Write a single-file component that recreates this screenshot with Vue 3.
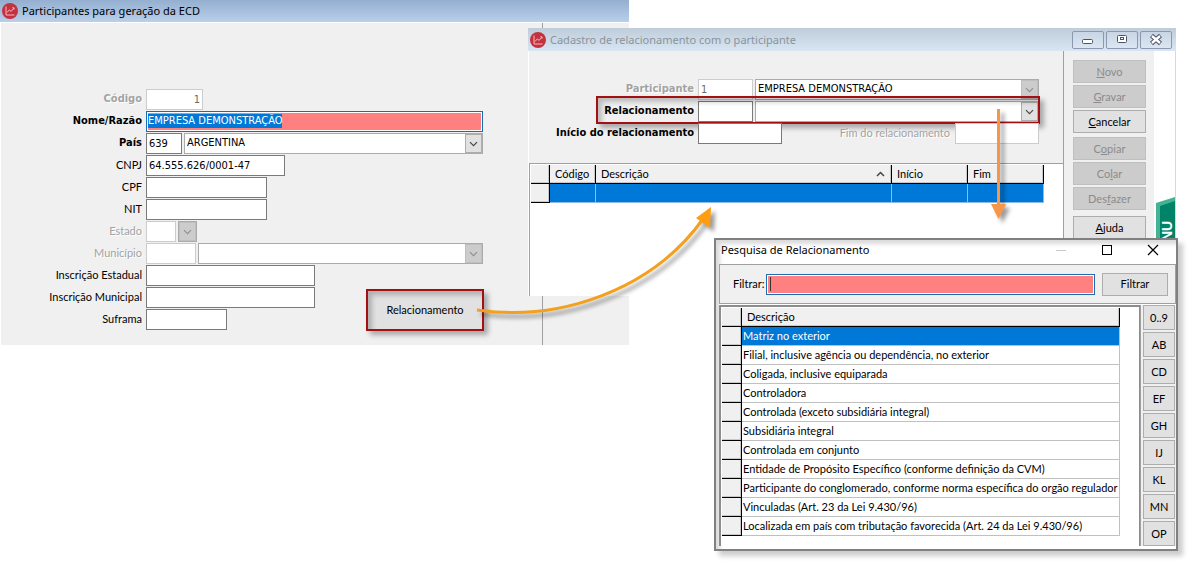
<script setup>
const form = [
  { id: 'codigo', label: 'Código', bold: true, off: true, w: 'w57', value: '1', right: true },
  { id: 'nome', label: 'Nome/Razão', bold: true, focus: true, w: 'w337', value: 'EMPRESA DEMONSTRAÇÃO' },
  { id: 'pais', label: 'País', bold: true, w: 'w36', value: '639', combo: 'ARGENTINA' },
  { id: 'cnpj', label: 'CNPJ', w: 'w139', value: '64.555.626/0001-47' },
  { id: 'cpf', label: 'CPF', w: 'w121', value: '' },
  { id: 'nit', label: 'NIT', w: 'w121', value: '' },
  { id: 'estado', label: 'Estado', off: true, w: 'w30', value: '', combo: '', small: true },
  { id: 'municipio', label: 'Município', off: true, w: 'w50', value: '', combo: '' },
  { id: 'ie', label: 'Inscrição Estadual', w: 'w169', value: '' },
  { id: 'im', label: 'Inscrição Municipal', w: 'w169', value: '' },
  { id: 'suframa', label: 'Suframa', w: 'w81', value: '' },
]
const actions = [
  [['', 'N', 'ovo', true], ['', 'G', 'ravar', true], ['', 'C', 'ancelar', false]],
  [['C', 'o', 'piar', true], ['Co', 'l', 'ar', true], ['Des', 'f', 'azer', true]],
  [['', 'A', 'juda', false]],
]
const rows = [
  'Matriz no exterior',
  'Filial, inclusive agência ou dependência, no exterior',
  'Coligada, inclusive equiparada',
  'Controladora',
  'Controlada (exceto subsidiária integral)',
  'Subsidiária integral',
  'Controlada em conjunto',
  'Entidade de Propósito Específico (conforme definição da CVM)',
  'Participante do conglomerado, conforme norma específica do orgão regulador',
  'Vinculadas (Art. 23 da Lei 9.430/96)',
  'Localizada em país com tributação favorecida (Art. 24 da Lei 9.430/96)',
]
const letters = ['0..9', 'AB', 'CD', 'EF', 'GH', 'IJ', 'KL', 'MN', 'OP']
</script>

<template>
  <main class="desk">
    <section class="win main-win">
      <header class="bar">
        <svg class="logo" viewBox="0 0 16 16"><circle cx="8" cy="8" r="8" fill="#c4313f" /><path d="M4 3.500V12h8.500M5 9.500l2.300-2.600 1.800 1.500L12 5M10.300 4.800H12v1.800" fill="none" stroke="#f5b9c0" stroke-width="1" /></svg>
        <h1>Participantes para geração da ECD</h1>
      </header>
      <div class="main-body">
        <form class="fields" @submit.prevent>
          <div v-for="f in form" :key="f.id" class="row">
            <label :for="f.id" :class="{ bold: f.bold, off: f.off }">{{ f.label }}</label>
            <span v-if="f.focus" class="focus" :class="f.w"><input :id="f.id" class="selected caps-text" :value="f.value" /></span>
            <input v-else :id="f.id" class="box caps-text" :class="[f.w, { right: f.right }]" :value="f.value" :disabled="f.off" />
            <span v-if="f.combo !== undefined" class="combo" :class="{ small: f.small, dis: f.off }">
              <select :aria-label="f.label + ' descrição'" class="caps-text" :disabled="f.off"><option>{{ f.combo }}</option></select>
              <svg class="drop" viewBox="0 0 17 19"><path d="M4.500 8l4 4 4-4" /></svg>
            </span>
          </div>
          <div class="mark rel-mark"><button type="button">Relacionamento</button></div>
        </form>
      </div>
    </section>

    <section class="win rel-win">
      <header class="bar faded">
        <svg class="logo" viewBox="0 0 16 16"><circle cx="8" cy="8" r="8" fill="#c4313f" /><path d="M4 3.500V12h8.500M5 9.500l2.300-2.600 1.800 1.500L12 5M10.300 4.800H12v1.800" fill="none" stroke="#f5b9c0" stroke-width="1" /></svg>
        <h2>Cadastro de relacionamento com o participante</h2>
        <div class="caps">
          <button aria-label="Minimizar"><svg viewBox="0 0 30 17"><rect x="9.500" y="7.500" width="10" height="4" rx="1" fill="#fff" stroke="#4c5568" /></svg></button>
          <button aria-label="Restaurar"><svg viewBox="0 0 30 17"><rect x="10.500" y="3.500" width="9" height="7" rx="1" fill="#fff" stroke="#4c5568" /><rect x="13.500" y="5.500" width="3" height="2" fill="#fff" stroke="#4c5568" /></svg></button>
          <button aria-label="Fechar"><svg viewBox="0 0 30 17"><path d="M10.500 3.500l9 8m0-8l-9 8" stroke="#4c5568" stroke-width="4.500" /><path d="M11 4l8 7m0-7l-8 7" stroke="#fff" stroke-width="2.400" /></svg></button>
        </div>
      </header>
      <div class="rel-body">
        <div class="rel-left">
          <form class="rel-form" @submit.prevent>
            <div class="row">
              <label for="part" class="bold off">Participante</label>
              <input id="part" class="box caps-text w55" value="1" disabled />
              <span class="combo dis blacktext"><select aria-label="Nome do participante" class="caps-text" disabled><option>EMPRESA DEMONSTRAÇÃO</option></select><svg class="drop" viewBox="0 0 17 19"><path d="M4.500 8l4 4 4-4" /></svg></span>
            </div>
            <div class="row">
              <label for="rel" class="bold">Relacionamento</label>
              <input id="rel" class="box w55" />
              <span class="combo"><select aria-label="Descrição do relacionamento"><option></option></select><svg class="drop" viewBox="0 0 17 19"><path d="M4.500 8l4 4 4-4" /></svg></span>
              <span class="mark row-mark"></span>
            </div>
            <div class="row">
              <label for="ini" class="bold">Início do relacionamento</label>
              <input id="ini" class="box w84" />
              <label for="fim" class="off end">Fim do relacionamento</label>
              <input id="fim" class="box w84" disabled />
            </div>
          </form>
          <div class="rel-grid">
            <table>
              <colgroup><col class="c19" /><col class="c46" /><col class="c296" /><col class="c76" /><col class="c76" /></colgroup>
              <thead><tr><th></th><th>Código</th><th><span class="sort">Descrição<svg viewBox="0 0 9 6"><path d="M1 5l3.500-3.500L8 5" fill="none" stroke="#444" stroke-width="1.500" /></svg></span></th><th>Início</th><th>Fim</th></tr></thead>
              <tbody><tr class="sel"><th></th><td></td><td></td><td></td><td></td></tr></tbody>
            </table>
          </div>
        </div>
        <aside class="side">
          <div v-for="(g, i) in actions" :key="i" class="group">
            <button v-for="a in g" :key="a[1]" :disabled="a[3]">{{ a[0] }}<u>{{ a[1] }}</u>{{ a[2] }}</button>
          </div>
        </aside>
        <div class="strip">
          <svg viewBox="0 0 19 60"><path d="M0 6L19 0v60H0z" fill="#43b394" /><path d="M4 9l15-5v56H4z" fill="#008368" /><text transform="translate(16 44) rotate(-90)" fill="#fff" font-size="14" font-weight="700" font-family="Liberation Sans, sans-serif">NU</text></svg>
        </div>
      </div>
    </section>

    <section class="win search-win">
      <header class="plain">
        <h2>Pesquisa de Relacionamento</h2>
        <div class="sys">
          <button aria-label="Minimizar"><svg viewBox="0 0 12 12"><path d="M1 6.500h10" stroke="#c8c8c8" /></svg></button>
          <button aria-label="Maximizar"><svg viewBox="0 0 12 12"><rect x="1.500" y="1.500" width="9" height="9" fill="none" stroke="#000" /></svg></button>
          <button aria-label="Fechar"><svg viewBox="0 0 12 12"><path d="M1 1l10 10M11 1L1 11" stroke="#000" stroke-width="1.200" /></svg></button>
        </div>
      </header>
      <form class="filter" @submit.prevent>
        <label for="filtrar">Filtrar:</label>
        <span class="focus"><i class="caret"></i><input id="filtrar" /></span>
        <button type="button">Filtrar</button>
      </form>
      <div class="result">
        <div class="list">
          <table>
            <colgroup><col class="c20" /><col class="c378" /></colgroup>
            <thead><tr><th></th><th>Descrição</th></tr></thead>
            <tbody><tr v-for="(r, i) in rows" :key="r" :class="{ sel: i === 0 }"><th></th><td>{{ r }}</td></tr></tbody>
          </table>
        </div>
        <nav class="letters"><button v-for="l in letters" :key="l">{{ l }}</button></nav>
      </div>
    </section>

    <svg class="arrows" width="1194" height="565" viewBox="0 0 1194 565">
      <path d="M477 310C560 322 652 290 703 219" fill="none" stroke="#f3a01e" stroke-width="3" />
      <path d="M711 207l-1 21-14-10z" fill="#ff9c10" />
      <path d="M998.500 109v98" stroke="#f79646" stroke-width="3" />
      <path d="M991 204h15l-7.500 15z" fill="#f79646" />
    </svg>
  </main>
</template>

<style>
body { background: #fff; }
</style>

<style scoped>
* { box-sizing: border-box; }
.desk { position: relative; min-height: 100vh; overflow: hidden; font: 11px/14px Lato, "Noto Sans", sans-serif; color: #000; }
h1, h2 { margin: 0; font: 11px/16px "Noto Sans", sans-serif; }
button, input, select { font: inherit; color: inherit; margin: 0; border-radius: 0; }
button { padding: 0; background: #e1e1e1; border: 1px solid #adadad; }
.win { position: absolute; background: #f0f0f0; }
.bar { display: flex; align-items: center; gap: 4px; height: 22px; padding: 0 2px; background: linear-gradient(#94afd0, #b9d0ea); }
.bar.faded { height: 23px; color: #8a939c; background: linear-gradient(#bfcddb, #d8e5f2); }
.logo { width: 16px; height: 16px; }
.main-win { left: 0; top: 0; width: 629px; }
.main-body { border-left: 1px solid #fff; border-top: 1px solid #fff; }
.fields { position: relative; width: 542px; padding: 65px 59px 15px 0; border-right: 1px solid #a0a0a0; }
.row { position: relative; display: flex; align-items: center; gap: 2px; height: 22px; }
.row > label { width: 141px; margin-right: 2px; text-align: right; white-space: nowrap; }
.row > .bold, .caps-text { font-family: "DejaVu Sans Condensed", "DejaVu Sans", sans-serif; }
.bold { font-weight: 700; }
.off { color: #a3a3a3; text-shadow: 1px 1px #fff; }
.box { height: 21px; padding: 0 2px; border: 1px solid #7a7a7a; background: #fff; outline: 0; }
.box:disabled { border-color: #ccc; color: #6d6d6d; }
.right { text-align: right; }
.w30 { width: 30px; } .w36 { width: 36px; } .w50 { width: 50px; } .w55 { width: 55px; } .w57 { width: 57px; }
.w81 { width: 81px; } .w84 { width: 84px; } .w121 { width: 121px; } .w139 { width: 139px; } .w169 { width: 169px; } .w337 { width: 337px; }
.focus { position: relative; display: flex; height: 21px; padding: 1px; border: 1px solid #1c6cb4; background: #fff; }
.focus input { width: 100%; border: 0; padding: 0; background: #ff8080; outline: 0; }
.focus .selected { background: linear-gradient(#0078d7, #0078d7) no-repeat 0 1px / 134px 14px #ff8080; color: #fff; }
.combo { position: relative; flex: 1; display: flex; height: 21px; border: 1px solid #ababab; background: #fff; }
.combo select { flex: 1; min-width: 0; appearance: none; border: 0; padding: 0 2px; background: transparent; outline: 0; opacity: 1; }
.combo.small { flex: 0 0 18px; }
.combo.small select { width: 0; padding: 0; }
.drop { width: 17px; height: 19px; border: 1px solid #adadad; background: #e1e1e1; fill: none; stroke: #444; stroke-width: 1.300; }
.dis .drop { background: #ccc; border-color: #bfbfbf; stroke: #909090; }
.mark { border: 2px solid #a31014; box-shadow: 4px 4px 5px rgba(0,0,0,.3), inset 4px 4px 5px rgba(0,0,0,.22); }
.rel-mark { position: absolute; right: 58px; bottom: 14px; width: 118px; height: 42px; background: #e1e1e1; display: flex; }
.rel-mark button { flex: 1; background: transparent; border: 0; }

.rel-win { left: 528px; top: 28px; width: 648px; }
.caps { display: flex; gap: 2px; margin-left: auto; padding-right: 2px; }
.caps button { width: 32px; height: 18px; background: linear-gradient(#c8d5e4, #dbe6f2); border: 1px solid #8c98b0; border-radius: 2px; }
.caps svg { display: block; width: 30px; height: 17px; }
.rel-body { display: flex; height: 245px; border-left: 1px solid #fff; }
.rel-left { flex: 1; display: flex; flex-direction: column; border-right: 1px solid #a0a0a0; }
.rel-form { padding: 27px 24px 19px 0; }
.rel-form .row > label:first-child { width: 165px; }
.rel-form .row > .end { width: auto; margin-left: auto; margin-right: 3px; }
.row-mark { position: absolute; left: 67px; right: -1px; top: -4px; height: 28px; }
.blacktext select { color: #000; }
.rel-grid { flex: 1; background: #fff; border: solid #a0a0a0; border-width: 1px 0 0 1px; padding: 1px; }
table { border-collapse: separate; border-spacing: 0; table-layout: fixed; width: 0; }
.c19 { width: 19px; } .c46 { width: 46px; } .c296 { width: 296px; } .c76 { width: 76px; } .c20 { width: 20px; } .c378 { width: 378px; }
th, td { height: 19px; padding: 0; font-weight: 400; text-align: left; white-space: nowrap; }
th { background: #f0f0f0; border-right: 1px solid #000; border-bottom: 1px solid #000; box-shadow: inset -1px -1px #c8c8c8; }
thead th { padding-left: 5px; }
td { padding-left: 1px; border-right: 1px solid #c0c0c0; border-bottom: 1px solid #c0c0c0; }
.sel td { background: #0078d7; color: #fff; }
.rel-grid .sel td { border-color: #8fbce6; }
.sort { display: flex; align-items: center; justify-content: space-between; padding-right: 6px; }
.sort svg { width: 9px; height: 6px; }
.side { width: 90px; padding: 9px 8px 0 9px; display: flex; flex-direction: column; gap: 4px; }
.group { display: grid; gap: 2px; }
.group:last-child { margin-top: 2px; }
.side button { height: 23px; }
.side button:disabled { background: #ccc; border-color: #bfbfbf; color: #8b8b8b; }
.strip { width: 22px; background: #fff; border-right: 1px solid #c8dced; padding: 146px 0 0 2px; }
.strip svg { display: block; width: 19px; height: 60px; }

.search-win { left: 714px; top: 238px; width: 464px; padding: 0 0 3px 3px; border: 2px solid #808080; background: #fff; box-shadow: 5px 5px 5px rgba(0,0,0,.2), inset 4px 4px 4px rgba(0,0,0,.15); }
.plain { display: flex; align-items: center; justify-content: space-between; height: 24px; padding: 0 17px 4px 2px; }
.sys { display: flex; gap: 34px; }
.sys button { width: 12px; height: 12px; border: 0; background: none; }
.sys svg { display: block; }
.filter { display: flex; align-items: center; height: 40px; padding: 0 7px 0 13px; background: #f0f0f0; border: 1px solid #a0a0a0; }
.filter .focus { flex: 1; margin: 0 7px 0 1px; }
.filter button { width: 66px; height: 23px; }
.caret { position: absolute; left: 3px; top: 2px; width: 1px; height: 14px; background: #333; }
.result { display: flex; border-top: 1px solid #fff; }
.list { flex: 1; background: #fff; border: solid #8c8c8c; border-width: 2px 1px 0 2px; padding: 1px 0 0 1px; }
.letters { display: grid; gap: 2px; width: 36px; padding: 0 1px 0 2px; background: #f0f0f0; border-left: 1px solid #a0a0a0; }
.letters button { height: 25px; }
.arrows { position: absolute; left: 0; top: 0; pointer-events: none; filter: drop-shadow(4px 4px 2px rgba(0,0,0,.4)); }
</style>
